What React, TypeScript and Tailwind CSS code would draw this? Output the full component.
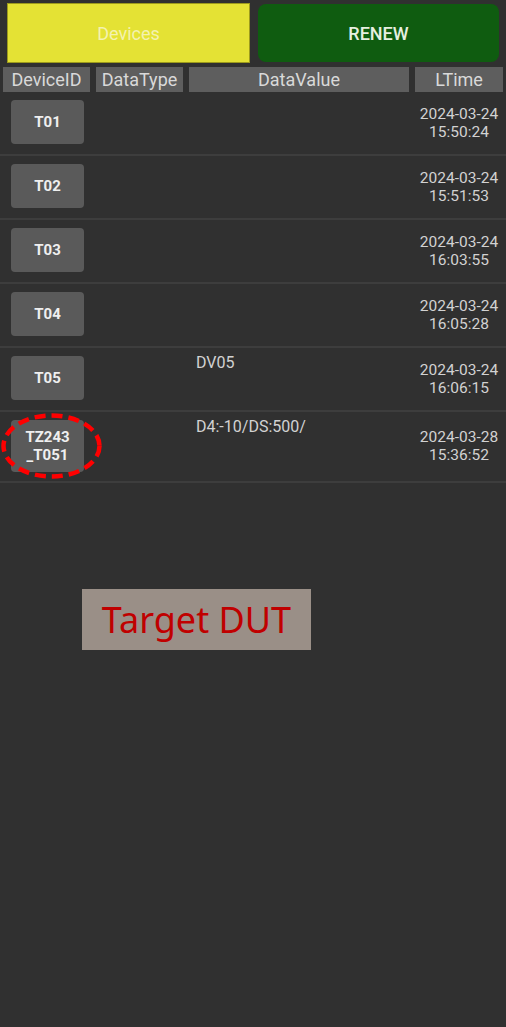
import React from "react";

type Row = { id: string[]; value?: string; date: string; time: string; tall?: boolean; marked?: boolean };

const rows: Row[] = [
  { id: ["T01"], date: "2024-03-24", time: "15:50:24" },
  { id: ["T02"], date: "2024-03-24", time: "15:51:53" },
  { id: ["T03"], date: "2024-03-24", time: "16:03:55" },
  { id: ["T04"], date: "2024-03-24", time: "16:05:28" },
  { id: ["T05"], value: "DV05", date: "2024-03-24", time: "16:06:15" },
  { id: ["TZ243", "_T051"], value: "D4:-10/DS:500/", date: "2024-03-28", time: "15:36:52", tall: true, marked: true },
];

export default function App() {
  return (
    <div
      className="w-[506px] h-[1027px] bg-[#303030] overflow-hidden"
      style={{ fontFamily: "Roboto, 'Noto Sans', sans-serif" }}
    >
      {/* top buttons */}
      <div className="flex gap-[8px] pl-[7px] pt-[3px]">
        <div className="w-[243px] h-[60px] bg-[#e4e234] border border-[#9c9a1c] flex items-center justify-center text-[18px] text-[#f4f2b0]">
          Devices
        </div>
        <div className="w-[241px] h-[58px] mt-[1px] rounded-[8px] bg-[#0f5c10] flex items-center justify-center text-[18px] font-medium text-[#e6efe0]">
          RENEW
        </div>
      </div>

      {/* header */}
      <div className="flex gap-[6px] pl-[3px] mt-[4px] text-[18px] text-[#d9d9d9]">
        <div className="w-[87px] h-[25px] bg-[#5e5e5e] flex items-center justify-center">DeviceID</div>
        <div className="w-[87px] h-[25px] bg-[#5e5e5e] flex items-center justify-center">DataType</div>
        <div className="w-[220px] h-[25px] bg-[#5e5e5e] flex items-center justify-center">DataValue</div>
        <div className="w-[88px] h-[25px] bg-[#5e5e5e] flex items-center justify-center">LTime</div>
      </div>

      {/* rows */}
      <div>
        {rows.map((r) => (
          <div
            key={r.id.join("")}
            className={`relative flex border-b-2 border-[#3d3d3d] ${r.tall ? "h-[71px]" : "h-[64px]"}`}
          >
            <div className="w-[189px] shrink-0 pl-[11px] pt-[8px]">
              <div
                className={`w-[73px] ${r.tall ? "h-[52px]" : "h-[44px]"} rounded-[4px] bg-[#5a5a5a] flex flex-col items-center justify-center text-[15px] leading-[18px] font-bold text-[#efefef]`}
              >
                {r.id.map((l) => (
                  <span key={l}>{l}</span>
                ))}
              </div>
            </div>
            <div className="w-[226px] shrink-0 pl-[7px] pt-[3px] text-[16px] text-[#d2d2d2]">{r.value}</div>
            <div
              className={`w-[88px] shrink-0 flex flex-col items-center text-[15.5px] leading-[18px] text-[#d2d2d2] ${r.tall ? "pt-[16px]" : "pt-[13px]"}`}
            >
              <span>{r.date}</span>
              <span>{r.time}</span>
            </div>
            {r.marked && (
              <svg className="absolute left-[1px] top-[1px]" width="101" height="66" viewBox="0 0 101 66">
                <ellipse cx="50.5" cy="33" rx="48" ry="30.5" fill="none" stroke="#ff0000" strokeWidth="4.5" strokeDasharray="11 6" />
              </svg>
            )}
          </div>
        ))}
      </div>

      {/* annotation */}
      <div className="ml-[82px] mt-[106px] w-[229px] h-[61px] bg-[#9a8f87] flex items-center justify-center">
        <span className="text-[36px] text-[#c00000]" style={{ fontFamily: "'Noto Sans', 'Open Sans', sans-serif" }}>
          Target DUT
        </span>
      </div>
    </div>
  );
}
